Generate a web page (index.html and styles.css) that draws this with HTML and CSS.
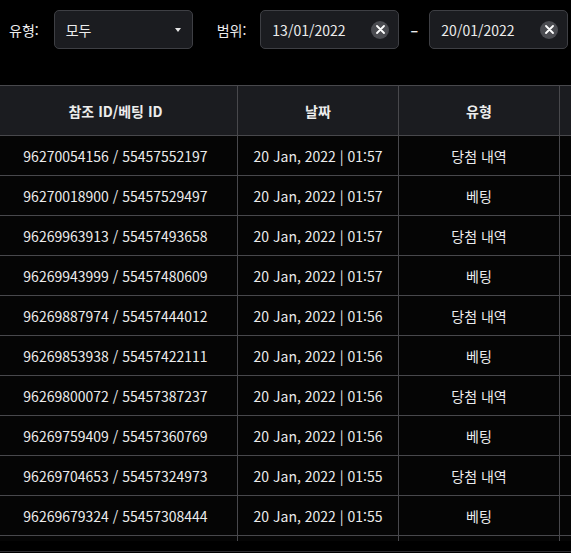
FILE: index.html
```html
<!DOCTYPE html>
<html lang="ko">
<head>
    <meta charset="UTF-8">
    <meta name="viewport" content="width=device-width, initial-scale=1.0">
    <title>베팅 내역</title>
    <link rel="stylesheet" href="styles.css">
</head>
<body>

<div class="filters">
    <span class="filter-label">유형:</span>
    <div class="select-box">
        <span>모두</span>
        <span class="caret"></span>
    </div>
    <span class="filter-label range-label">범위:</span>
    <div class="date-box">
        <span>13/01/2022</span>
        <span class="clear-btn">
            <svg width="9" height="9" viewBox="0 0 9 9"><path d="M1 1 L8 8 M8 1 L1 8" stroke="#fff" stroke-width="1.8" stroke-linecap="round"/></svg>
        </span>
    </div>
    <span class="dash">–</span>
    <div class="date-box">
        <span>20/01/2022</span>
        <span class="clear-btn">
            <svg width="9" height="9" viewBox="0 0 9 9"><path d="M1 1 L8 8 M8 1 L1 8" stroke="#fff" stroke-width="1.8" stroke-linecap="round"/></svg>
        </span>
    </div>
</div>

<div class="table-wrap">
    <table class="history">
        <colgroup>
            <col class="col-id">
            <col class="col-date">
            <col class="col-type">
            <col class="col-more">
        </colgroup>
        <thead>
            <tr>
                <th>참조 ID/베팅 ID</th>
                <th>날짜</th>
                <th>유형</th>
                <th></th>
            </tr>
        </thead>
        <tbody>
            <tr><td>96270054156 / 55457552197</td><td>20 Jan, 2022 | 01:57</td><td>당첨 내역</td><td></td></tr>
            <tr><td>96270018900 / 55457529497</td><td>20 Jan, 2022 | 01:57</td><td>베팅</td><td></td></tr>
            <tr><td>96269963913 / 55457493658</td><td>20 Jan, 2022 | 01:57</td><td>당첨 내역</td><td></td></tr>
            <tr><td>96269943999 / 55457480609</td><td>20 Jan, 2022 | 01:57</td><td>베팅</td><td></td></tr>
            <tr><td>96269887974 / 55457444012</td><td>20 Jan, 2022 | 01:56</td><td>당첨 내역</td><td></td></tr>
            <tr><td>96269853938 / 55457422111</td><td>20 Jan, 2022 | 01:56</td><td>베팅</td><td></td></tr>
            <tr><td>96269800072 / 55457387237</td><td>20 Jan, 2022 | 01:56</td><td>당첨 내역</td><td></td></tr>
            <tr><td>96269759409 / 55457360769</td><td>20 Jan, 2022 | 01:56</td><td>베팅</td><td></td></tr>
            <tr><td>96269704653 / 55457324973</td><td>20 Jan, 2022 | 01:55</td><td>당첨 내역</td><td></td></tr>
            <tr><td>96269679324 / 55457308444</td><td>20 Jan, 2022 | 01:55</td><td>베팅</td><td></td></tr>
            <tr><td></td><td></td><td></td><td></td></tr>
        </tbody>
    </table>
</div>
<div class="scroll-track"></div>

</body>
</html>
```

FILE: styles.css
```css
body {
    margin: 0;
    background-color: #000;
    color: #ececec;
    font-family: "Noto Sans CJK KR", "Noto Sans", sans-serif;
    font-size: 14px;
    overflow: hidden;
}
.filters {
    display: flex;
    align-items: center;
    padding: 10px 0 0 9px;
    height: 39px;
}
.filter-label {
    margin-right: 15px;
}
.range-label {
    margin-left: 24px;
    margin-right: 14px;
}
.select-box, .date-box {
    box-sizing: border-box;
    width: 139px;
    height: 39px;
    background-color: #1b1c20;
    border: 1px solid #3e3f44;
    border-radius: 5px;
    display: flex;
    align-items: center;
    justify-content: space-between;
    padding: 0 9px 0 11px;
}
.caret {
    width: 0;
    height: 0;
    border-left: 3px solid transparent;
    border-right: 3px solid transparent;
    border-top: 4px solid #e6e6e6;
    margin-right: 2px;
}
.clear-btn {
    width: 18px;
    height: 18px;
    border-radius: 50%;
    background-color: #4b4c51;
    display: flex;
    align-items: center;
    justify-content: center;
}
.dash {
    width: 30px;
    text-align: center;
    font-weight: bold;
}
.table-wrap {
    margin-top: 36px;
    height: 456px;
    overflow: hidden;
}
.history {
    border-collapse: collapse;
    table-layout: fixed;
    width: 727px;
    margin-left: -7px;
}
.col-id { width: 244px; }
.col-date { width: 161px; }
.col-type { width: 161px; }
.col-more { width: 161px; }
.history th, .history td {
    border: 1px solid #48484c;
    text-align: center;
    white-space: nowrap;
    padding: 0;
}
.history th {
    background-color: #1b1c20;
    font-weight: bold;
    height: 49px;
}
.history td {
    background-color: #050505;
    height: 39px;
}
.scroll-track {
    height: 10px;
    border-bottom: 1px solid #2f2f33;
}
```
